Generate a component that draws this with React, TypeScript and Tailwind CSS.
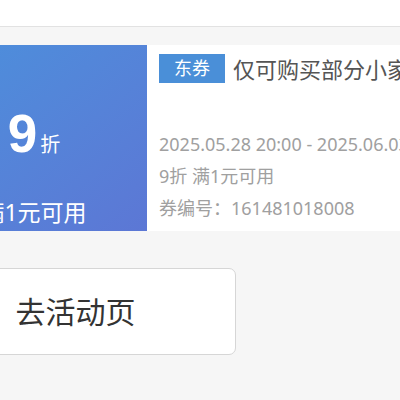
import React from 'react'

const App = () => {
  return (
    <div className="w-[400px] h-[400px] overflow-hidden bg-[#f6f6f6] font-['Noto_Sans','Noto_Sans_CJK_SC',sans-serif]">
      <div className="h-[27px] bg-white border-b border-[#e2e2e2]" />
      <div className="-ml-[85px] pt-[18px]">
        <div className="flex h-[186px]">
          <div className="w-[232px] shrink-0 pl-[6px] flex flex-col items-center text-white bg-gradient-to-br from-[#4a91dc] to-[#5c77d5]">
            <div className="flex items-baseline mt-[62px] h-[52px]">
              <span className="font-['Liberation_Sans',sans-serif] font-bold text-[53px] leading-none">
                9
              </span>
              <span className="ml-[3px] text-[20px] leading-none">折</span>
            </div>
            <div className="mt-[42px] text-[23px] leading-none whitespace-nowrap">满1元可用</div>
          </div>
          <div className="flex-1 min-w-0 bg-white pl-[12px] pt-[9px] whitespace-nowrap overflow-hidden">
            <div className="flex items-center">
              <span className="shrink-0 bg-[#4a8fd8] text-white text-[18px] leading-[29px] h-[29px] w-[66px] text-center">
                东券
              </span>
              <span className="shrink-0 ml-[8px] text-[22px] text-[#555] leading-none">
                仅可购买部分小家电商品
              </span>
            </div>
            <div className="mt-[45px] text-[18px] leading-[32px] text-[#a0a0a0]">
              <div>2025.05.28 20:00 - 2025.06.03 23:59</div>
              <div>9折 满1元可用</div>
              <div>券编号：161481018008</div>
            </div>
          </div>
        </div>
        <button className="mt-[37px] w-[321px] h-[87px] bg-white border border-[#d6d6d6] rounded-[7px] text-[30px] text-[#333] leading-none">
          去活动页
        </button>
      </div>
    </div>
  )
}

export default App
